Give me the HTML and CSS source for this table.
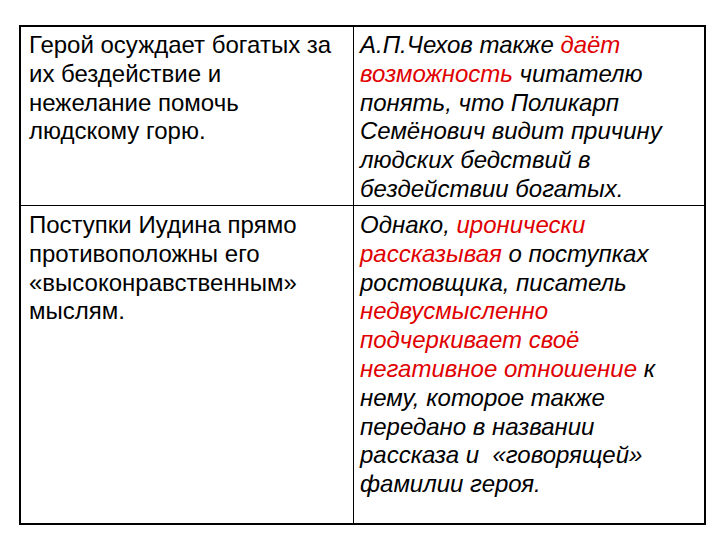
FILE: index.html
```html
<!DOCTYPE html>
<html lang="ru">
<head>
<meta charset="utf-8">
<link rel="stylesheet" href="styles.css">
</head>
<body>
<div class="table">
  <div class="cell left top">Герой осуждает богатых за<br>их бездействие и<br>нежелание помочь<br>людскому горю.</div>
  <div class="cell right top"><span class="it">А.П.Чехов также <span class="red">даёт</span><br><span class="red">возможность</span> читателю<br>понять, что Поликарп<br>Семёнович видит причину<br>людских бедствий в<br>бездействии богатых.</span></div>
  <div class="cell left bottom">Поступки Иудина прямо<br>противоположны его<br>«высоконравственным»<br>мыслям.</div>
  <div class="cell right bottom"><span class="it">Однако, <span class="red">иронически</span><br><span class="red">рассказывая</span> о поступках<br>ростовщика, писатель<br><span class="red">недвусмысленно</span><br><span class="red">подчеркивает своё</span><br><span class="red">негативное отношение</span> к<br>нему, которое также<br>передано в названии<br>рассказа и &nbsp;«говорящей»<br>фамилии героя.</span></div>
</div>
</body>
</html>
```
FILE: styles.css
```css
html, body {
  margin: 0;
  padding: 0;
  background: #fff;
}
body {
  padding: 25px 0 0 19px;
  font-family: "Liberation Sans", Arial, sans-serif;
  font-size: 24px;
  line-height: 28.8px;
  color: #000;
}
.table {
  width: 687px;
  height: 500px;
  box-sizing: border-box;
  border: 2px solid #000;
  display: grid;
  grid-template-columns: 333px 350px;
  grid-template-rows: 179px 317px;
}
.cell {
  box-sizing: border-box;
  white-space: nowrap;
}
.left {
  border-right: 1px solid #000;
  padding-left: 8px;
}
.right {
  padding-left: 6px;
}
.top {
  border-bottom: 1px solid #000;
  padding-top: 4px;
}
.bottom {
  padding-top: 5px;
}
.it {
  font-style: italic;
}
.red {
  color: #e00000;
}
```
